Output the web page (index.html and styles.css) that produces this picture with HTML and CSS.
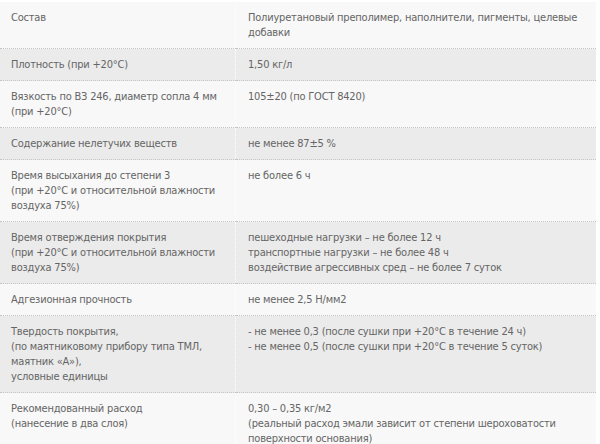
FILE: index.html
```html
<!DOCTYPE html>
<html lang="ru">
<head>
<meta charset="utf-8">
<link rel="stylesheet" href="styles.css">
</head>
<body>
<table class="spec">
<tr class="odd"><td class="name">Состав</td><td class="val">Полиуретановый преполимер, наполнители, пигменты, целевые добавки</td></tr>
<tr class="even"><td class="name">Плотность (при +20°C)</td><td class="val">1,50 кг/л</td></tr>
<tr class="odd"><td class="name">Вязкость по ВЗ 246, диаметр сопла 4 мм (при +20°C)</td><td class="val">105±20 (по ГОСТ 8420)</td></tr>
<tr class="even"><td class="name">Содержание нелетучих веществ</td><td class="val">не менее 87±5 %</td></tr>
<tr class="odd"><td class="name">Время высыхания до степени 3<br>(при +20°C и относительной влажности воздуха 75%)</td><td class="val">не более 6 ч</td></tr>
<tr class="even"><td class="name">Время отверждения покрытия<br>(при +20°C и относительной влажности воздуха 75%)</td><td class="val">пешеходные нагрузки – не более 12 ч<br>транспортные нагрузки – не более 48 ч<br>воздействие агрессивных сред – не более 7 суток</td></tr>
<tr class="odd"><td class="name">Адгезионная прочность</td><td class="val">не менее 2,5 Н/мм2</td></tr>
<tr class="even"><td class="name">Твердость покрытия,<br>(по маятниковому прибору типа ТМЛ,<br>маятник «А»),<br>условные единицы</td><td class="val">- не менее 0,3 (после сушки при +20°C в течение 24 ч)<br>- не менее 0,5 (после сушки при +20°C в течение 5 суток)</td></tr>
<tr class="odd"><td class="name">Рекомендованный расход<br>(нанесение в два слоя)</td><td class="val">0,30 – 0,35 кг/м2<br>(реальный расход эмали зависит от степени шероховатости поверхности основания)</td></tr>
</table>
</body>
</html>
```

FILE: styles.css
```css
html, body {
  margin: 0;
  padding: 0;
  background: #ffffff;
}
body {
  padding-top: 2px;
  font-family: "DejaVu Sans Condensed", "DejaVu Sans", Verdana, sans-serif;
  font-stretch: semi-condensed;
  font-size: 11px;
  line-height: 15px;
  letter-spacing: -0.2px;
  color: #656565;
}
.spec {
  width: 596px;
  border-collapse: collapse;
  border-spacing: 0;
}
.spec td {
  vertical-align: top;
  padding: 8px 4px 8px 11px;
  border-bottom: 1px dotted #c4c4c4;
}
.spec .name {
  width: 220px;
  border-right: 1px dotted #ffffff;
}
.spec .val {
  padding-left: 12px;
}
.odd td {
  background: #f8f8f8;
}
.even td {
  background: #ebebeb;
}
```
